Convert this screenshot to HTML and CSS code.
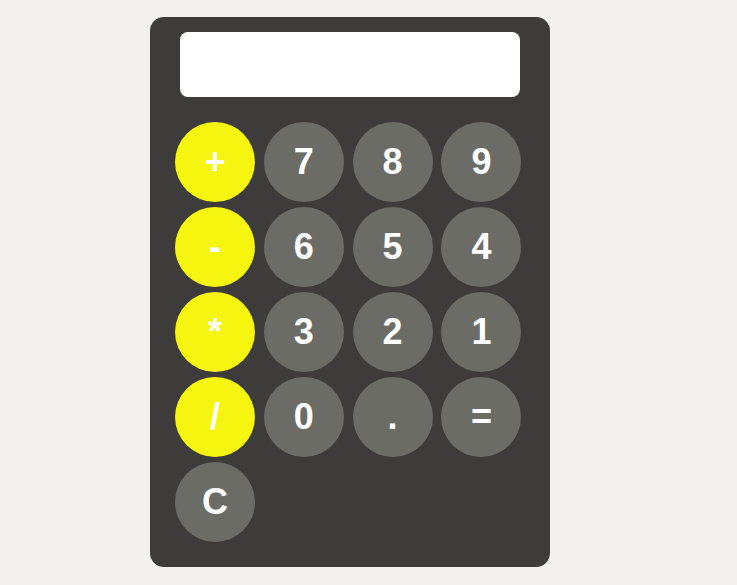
FILE: index.html
```html
<!DOCTYPE html>
<html>
<head>
<meta charset="utf-8">
<link rel="stylesheet" href="styles.css">
</head>
<body>
<div class="calc">
  <div class="display"></div>
  <div class="keys">
    <button class="key op">+</button>
    <button class="key">7</button>
    <button class="key">8</button>
    <button class="key">9</button>
    <button class="key op">-</button>
    <button class="key">6</button>
    <button class="key">5</button>
    <button class="key">4</button>
    <button class="key op">*</button>
    <button class="key">3</button>
    <button class="key">2</button>
    <button class="key">1</button>
    <button class="key op">/</button>
    <button class="key">0</button>
    <button class="key">.</button>
    <button class="key">=</button>
    <button class="key">C</button>
  </div>
</div>
</body>
</html>
```
FILE: styles.css
```css
html, body {
  margin: 0;
  padding: 0;
  background: #f2f1ef;
  font-family: "Liberation Sans", Arial, sans-serif;
}
body {
  padding: 17px 0 0 150px;
}
.calc {
  width: 400px;
  height: 550px;
  box-sizing: border-box;
  background: #3d3c3a;
  border-radius: 14px;
  padding: 15px 0 0 25px;
}
.display {
  width: 340px;
  height: 65px;
  margin-left: 5px;
  background: #ffffff;
  border-radius: 8px;
}
.keys {
  margin-top: 25px;
  display: grid;
  grid-template-columns: repeat(4, 80px);
  column-gap: 8.8px;
  row-gap: 5px;
}
.key {
  width: 80px;
  height: 80px;
  border: none;
  border-radius: 50%;
  background: #6c6c66;
  color: #ffffff;
  font-family: "Liberation Sans", Arial, sans-serif;
  font-weight: bold;
  font-size: 36px;
  padding: 0;
  display: flex;
  align-items: center;
  justify-content: center;
}
.key.op {
  background: #f5f510;
}
```
